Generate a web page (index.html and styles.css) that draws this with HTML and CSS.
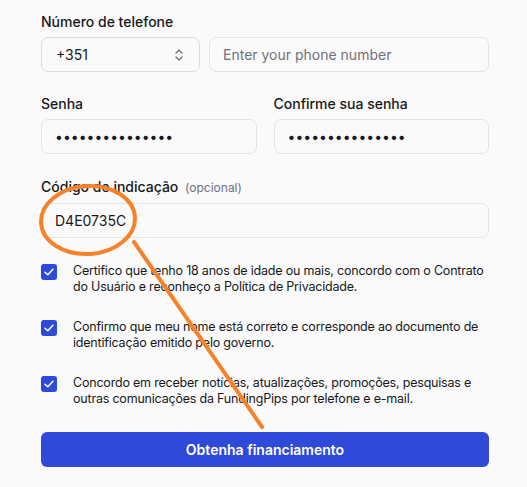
FILE: index.html
```html
<!DOCTYPE html>
<html lang="pt">
<head>
    <meta charset="UTF-8">
    <meta name="viewport" content="width=device-width, initial-scale=1.0">
    <title>Cadastro - FundingPips</title>
    <link rel="stylesheet" href="styles.css">
</head>
<body>
    <form class="signup-form">
        <div class="field">
            <label class="field-label">Número de telefone</label>
            <div class="phone-row">
                <div class="select-box">
                    <span>+351</span>
                    <svg class="chevrons" width="10" height="14" viewBox="0 0 10 14">
                        <path d="M2 5 L5 2 L8 5 M2 9 L5 12 L8 9" fill="none" stroke="#71717a" stroke-width="1.3" stroke-linecap="round" stroke-linejoin="round"/>
                    </svg>
                </div>
                <input type="tel" class="text-input phone-input" placeholder="Enter your phone number">
            </div>
        </div>

        <div class="field-pair">
            <div class="field">
                <label class="field-label">Senha</label>
                <input type="password" class="text-input" value="abcdefghijklmno">
            </div>
            <div class="field">
                <label class="field-label">Confirme sua senha</label>
                <input type="password" class="text-input" value="abcdefghijklmno">
            </div>
        </div>

        <div class="field">
            <label class="field-label">Código de indicação <span class="optional">(opcional)</span></label>
            <input type="text" class="text-input" value="D4E0735C">
        </div>

        <div class="checks">
            <label class="check-item">
                <span class="check-box"><svg width="10" height="8" viewBox="0 0 10 8"><path d="M1 4.2 L3.8 6.8 L9 1.2" fill="none" stroke="#fff" stroke-width="1.5" stroke-linecap="round" stroke-linejoin="round"/></svg></span>
                <span>Certifico que tenho 18 anos de idade ou mais, concordo com o Contrato do Usuário e reconheço a Política de Privacidade.</span>
            </label>
            <label class="check-item">
                <span class="check-box"><svg width="10" height="8" viewBox="0 0 10 8"><path d="M1 4.2 L3.8 6.8 L9 1.2" fill="none" stroke="#fff" stroke-width="1.5" stroke-linecap="round" stroke-linejoin="round"/></svg></span>
                <span>Confirmo que meu nome está correto e corresponde ao documento de identificação emitido pelo governo.</span>
            </label>
            <label class="check-item">
                <span class="check-box"><svg width="10" height="8" viewBox="0 0 10 8"><path d="M1 4.2 L3.8 6.8 L9 1.2" fill="none" stroke="#fff" stroke-width="1.5" stroke-linecap="round" stroke-linejoin="round"/></svg></span>
                <span>Concordo em receber notícias, atualizações, promoções, pesquisas e outras comunicações da FundingPips por telefone e e-mail.</span>
            </label>
        </div>

        <button type="button" class="submit-btn">Obtenha financiamento</button>
    </form>

    <!-- marker drawn on top of the screenshot -->
    <svg class="annotation" width="527" height="487" viewBox="0 0 527 487">
        <ellipse cx="88" cy="220" rx="47" ry="34" transform="rotate(-4 88 220)" fill="none" stroke="#f7822a" stroke-width="4"/>
        <line x1="134" y1="242" x2="262" y2="427" stroke="#f7822a" stroke-width="4" stroke-linecap="round"/>
    </svg>
</body>
</html>
```

FILE: styles.css
```css
body {
    margin: 0;
    padding: 0;
    background-color: #fafafa;
    font-family: Inter, 'Noto Sans', sans-serif;
    color: #18181b;
    position: relative;
    height: 487px;
    overflow: hidden;
}

.signup-form {
    width: 448px;
    padding: 12px 0 0 41px;
    display: flex;
    flex-direction: column;
}

.field {
    display: flex;
    flex-direction: column;
    flex: 1;
}

.field-label {
    font-size: 14px;
    line-height: 20px;
    font-weight: 500;
    margin-bottom: 5px;
}

.optional {
    font-size: 12px;
    color: #6b7280;
    font-weight: 400;
    margin-left: 3px;
}

.phone-row {
    display: flex;
    gap: 9px;
}

.select-box {
    width: 159px;
    height: 35px;
    box-sizing: border-box;
    border: 1px solid #dcdde2;
    border-radius: 7px;
    background-color: #fafafa;
    display: flex;
    align-items: center;
    justify-content: space-between;
    padding: 0 14px;
    font-size: 14px;
}

.chevrons {
    margin-right: 1px;
}

.text-input {
    width: 100%;
    height: 35px;
    box-sizing: border-box;
    border: 1px solid #e4e4e7;
    border-radius: 7px;
    background-color: #fafafa;
    padding: 0 13px;
    font-family: Inter, 'Noto Sans', sans-serif;
    font-size: 14px;
    color: #18181b;
    outline: none;
}

.text-input::placeholder {
    color: #71717a;
}

.phone-input {
    flex: 1;
}

.field-pair {
    display: flex;
    gap: 17px;
    margin-top: 22px;
}

.field-pair + .field {
    margin-top: 23px;
}

.checks {
    display: flex;
    flex-direction: column;
    gap: 24px;
    margin-top: 25px;
}

.check-item {
    display: flex;
    gap: 16px;
    font-size: 12.5px;
    line-height: 16px;
    letter-spacing: -0.2px;
}

.check-box {
    flex: none;
    width: 16px;
    height: 16px;
    margin-top: 1px;
    border-radius: 3px;
    background-color: #2f49d8;
    display: flex;
    align-items: center;
    justify-content: center;
}

.submit-btn {
    margin-top: 25px;
    height: 35px;
    border: none;
    border-radius: 6px;
    background-color: #2f49d8;
    color: #fff;
    font-family: Inter, 'Noto Sans', sans-serif;
    font-size: 14px;
    font-weight: 600;
    cursor: pointer;
}

.annotation {
    position: absolute;
    top: 0;
    left: 0;
    pointer-events: none;
}
```
